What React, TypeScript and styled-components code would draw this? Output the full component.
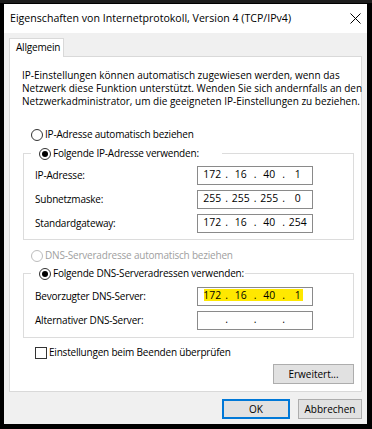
import styled, { createGlobalStyle } from 'styled-components';

const GlobalStyle = createGlobalStyle`
  html, body {
    margin: 0;
    padding: 0;
    background: #000;
  }
  body {
    font-family: "Open Sans", "Noto Sans", sans-serif;
    font-size: 10px;
    letter-spacing: -0.2px;
    line-height: 13px;
    color: #000;
  }
  * {
    box-sizing: border-box;
  }
`;

const Screen = styled.div`
  width: 372px;
  height: 429px;
  padding: 4px 5px 5px 4px;
  background: linear-gradient(#1d1d1d 0 3px, #000 3px);
`;

const Window = styled.div`
  width: 363px;
  height: 420px;
  background: #f0f0f0;
  display: flex;
  flex-direction: column;
`;

const TitleBar = styled.div`
  height: 29px;
  background: #fff;
  display: flex;
  align-items: center;
  justify-content: space-between;
  padding: 0 6px 0 6px;
`;

const Title = styled.span`
  font-size: 10.6px;
  letter-spacing: 0;
`;

const Body = styled.div`
  flex: 1;
  display: flex;
  flex-direction: column;
  padding: 5px 5px 0 5px;
`;

const TabStrip = styled.div`
  display: flex;
  height: 18px;
`;

const Tab = styled.div`
  width: 55px;
  height: 19px;
  padding: 2px 0 0 6px;
  background: #fff;
  border: 1px solid #d9d9d9;
  border-bottom: none;
  position: relative;
  z-index: 1;
`;

const Panel = styled.div`
  height: 336px;
  background: #fff;
  border: 1px solid #d9d9d9;
  padding: 12px 7px 0 13px;
  display: flex;
  flex-direction: column;
`;

const Intro = styled.p`
  margin: 0 0 0 -1px;
  font-size: 10px;
  letter-spacing: 0;
  white-space: nowrap;
`;

const OptionRow = styled.label<{ $disabled?: boolean }>`
  display: flex;
  align-items: center;
  gap: 2px;
  height: 13px;
  margin-left: 8px;
  color: ${(p) => (p.$disabled ? '#a0a0a0' : '#000')};
  white-space: nowrap;
`;

const RadioDot = styled.span<{ $checked?: boolean; $disabled?: boolean }>`
  width: 12px;
  height: 12px;
  border-radius: 50%;
  border: 1px solid ${(p) => (p.$disabled ? '#bcbcbc' : '#333')};
  background: #fff;
  display: inline-flex;
  align-items: center;
  justify-content: center;
  flex: none;

  &::after {
    content: '';
    width: 6px;
    height: 6px;
    border-radius: 50%;
    background: ${(p) => (p.$checked ? '#000' : 'transparent')};
  }
`;

const CheckBox = styled.span`
  width: 12px;
  height: 12px;
  border: 1px solid #333;
  background: #fff;
  flex: none;
`;

const Group = styled.fieldset<{ $top: number; $bottom: number }>`
  margin: 0;
  border: 1px solid #dcdcdc;
  padding: 0 0 ${(p) => p.$bottom}px 11px;
  display: flex;
  flex-direction: column;
  gap: 5px;

  & > legend {
    margin-left: -4px;
    padding: 0;
    margin-bottom: ${(p) => p.$top}px;
  }
`;

const Legend = styled.legend<{ $width: number }>`
  width: ${(p) => p.$width}px;
`;

const FieldRow = styled.div`
  display: grid;
  grid-template-columns: 162px 116px;
  align-items: center;
`;

const IpBox = styled.div`
  height: 19px;
  border: 1px solid #8a8a8a;
  background: #fff;
  padding-top: 1px;
  font-size: 10.4px;
  letter-spacing: 0;
`;

const IpSegments = styled.div<{ $highlight?: boolean }>`
  display: grid;
  grid-template-columns: 1fr 0 1fr 0 1fr 0 1fr;
  height: 13px;
  line-height: 13px;
  background: ${(p) =>
    p.$highlight
      ? 'linear-gradient(#ffe800, #ffe800) 6px -1px / calc(100% - 15px) 13px no-repeat'
      : 'none'};
`;

const Segment = styled.span`
  text-align: center;
`;

const Dot = styled.span`
  display: flex;
  justify-content: center;
  width: 0;
`;

const Spacer = styled.div<{ $h: number }>`
  height: ${(p) => p.$h}px;
  flex: none;
`;

const CheckRow = styled(OptionRow)`
  margin-left: 12px;
`;

const ButtonRow = styled.div<{ $gap: number }>`
  display: flex;
  justify-content: flex-end;
  gap: ${(p) => p.$gap}px;
`;

const Button = styled.button<{ $width: number; $primary?: boolean }>`
  width: ${(p) => p.$width}px;
  height: 20px;
  padding: 0;
  font: inherit;
  letter-spacing: 0;
  color: #000;
  background: #e1e1e1;
  border: 1px solid ${(p) => (p.$primary ? '#0078d7' : '#adadad')};
  box-shadow: ${(p) => (p.$primary ? 'inset 0 0 0 1px #0078d7' : 'none')};
`;

const Footer = styled(ButtonRow)`
  margin-top: 7px;
`;

function CloseIcon() {
  return (
    <svg width="11" height="11" viewBox="0 0 11 11">
      <path d="M0.5 0.5 L10.5 10.5 M10.5 0.5 L0.5 10.5" stroke="#000" strokeWidth="1" />
    </svg>
  );
}

function Radio({ label, checked, disabled }: { label: string; checked?: boolean; disabled?: boolean }) {
  return (
    <OptionRow $disabled={disabled}>
      <RadioDot $checked={checked} $disabled={disabled} />
      {label}
    </OptionRow>
  );
}

function IpField({ value, highlight }: { value: string[]; highlight?: boolean }) {
  return (
    <IpBox>
      <IpSegments $highlight={highlight}>
        <Segment>{value[0]}</Segment>
        <Dot>.</Dot>
        <Segment>{value[1]}</Segment>
        <Dot>.</Dot>
        <Segment>{value[2]}</Segment>
        <Dot>.</Dot>
        <Segment>{value[3]}</Segment>
      </IpSegments>
    </IpBox>
  );
}

function App() {
  return (
    <Screen>
      <GlobalStyle />
      <Window>
        <TitleBar>
          <Title>Eigenschaften von Internetprotokoll, Version 4 (TCP/IPv4)</Title>
          <CloseIcon />
        </TitleBar>
        <Body>
          <TabStrip>
            <Tab>Allgemein</Tab>
          </TabStrip>
          <Panel>
            <Intro>
              IP-Einstellungen können automatisch zugewiesen werden, wenn das
              <br />
              Netzwerk diese Funktion unterstützt. Wenden Sie sich andernfalls an den
              <br />
              Netzwerkadministrator, um die geeigneten IP-Einstellungen zu beziehen.
            </Intro>
            <Spacer $h={20} />
            <Radio label="IP-Adresse automatisch beziehen" />
            <Spacer $h={6} />
            <Group $top={6} $bottom={6}>
              <Legend $width={191}>
                <Radio label="Folgende IP-Adresse verwenden:" checked />
              </Legend>
              <FieldRow>
                <span>IP-Adresse:</span>
                <IpField value={['172', '16', '40', '1']} />
              </FieldRow>
              <FieldRow>
                <span>Subnetzmaske:</span>
                <IpField value={['255', '255', '255', '0']} />
              </FieldRow>
              <FieldRow>
                <span>Standardgateway:</span>
                <IpField value={['172', '16', '40', '254']} />
              </FieldRow>
            </Group>
            <Spacer $h={9} />
            <Radio label="DNS-Serveradresse automatisch beziehen" disabled />
            <Spacer $h={5} />
            <Group $top={7} $bottom={7}>
              <Legend $width={214}>
                <Radio label="Folgende DNS-Serveradressen verwenden:" checked />
              </Legend>
              <FieldRow>
                <span>Bevorzugter DNS-Server:</span>
                <IpField value={['172', '16', '40', '1']} highlight />
              </FieldRow>
              <FieldRow>
                <span>Alternativer DNS-Server:</span>
                <IpField value={['', '', '', '']} />
              </FieldRow>
            </Group>
            <Spacer $h={8} />
            <CheckRow>
              <CheckBox />
              Einstellungen beim Beenden überprüfen
            </CheckRow>
            <Spacer $h={5} />
            <ButtonRow $gap={0}>
              <Button $width={81}>Erweitert...</Button>
            </ButtonRow>
          </Panel>
          <Footer $gap={8}>
            <Button $width={68} $primary>
              OK
            </Button>
            <Button $width={64}>Abbrechen</Button>
          </Footer>
        </Body>
      </Window>
    </Screen>
  );
}

export default App;
